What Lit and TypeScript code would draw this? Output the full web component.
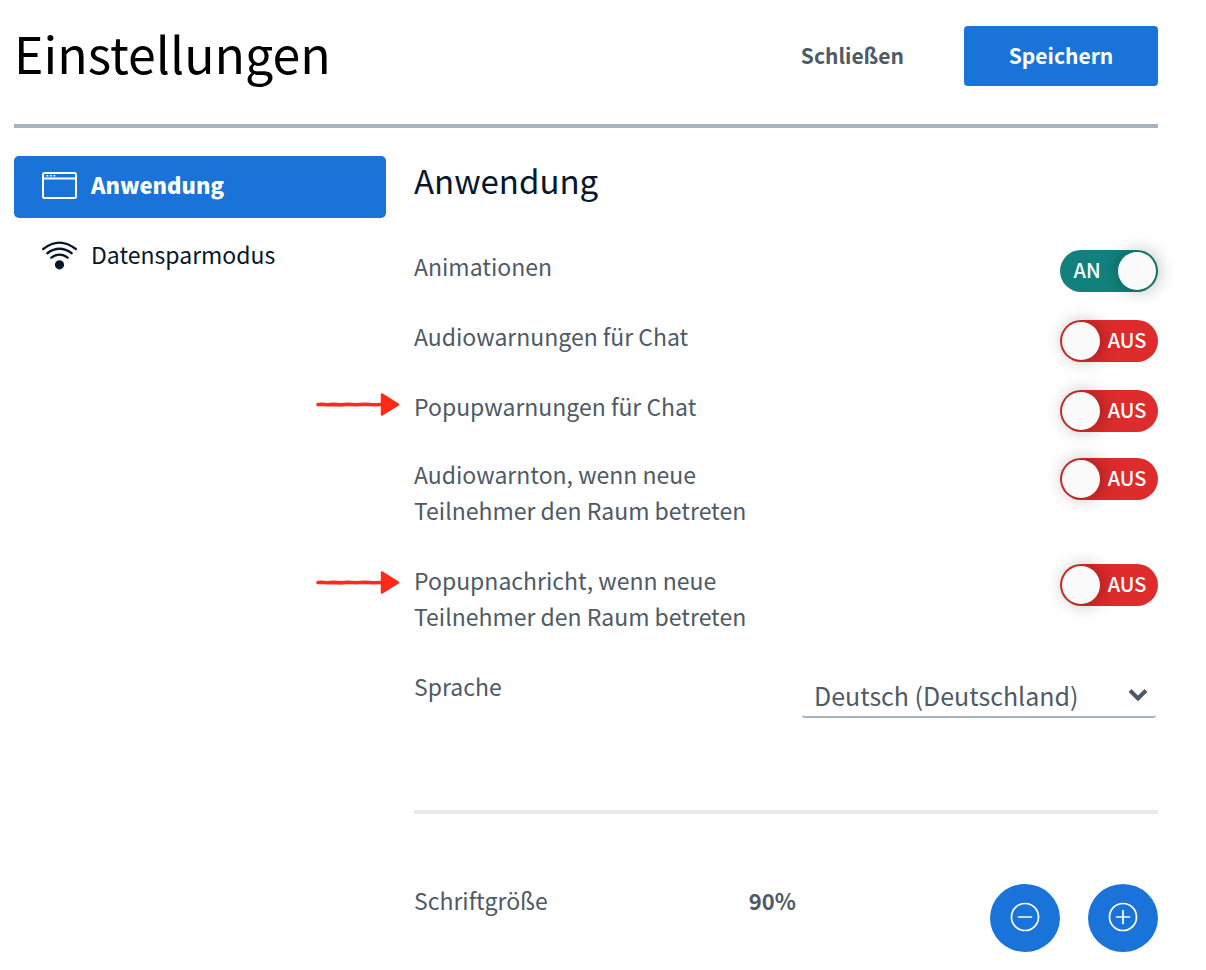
import { LitElement, html, css, svg, nothing } from "lit";
import { customElement, property, state } from "lit/decorators.js";

@customElement("toggle-switch")
class ToggleSwitch extends LitElement {
  @property({ type: Boolean }) checked = false;
  @property() label = "";

  static styles = css`
    :host {
      display: block;
      flex: none;
      padding-top: 2px;
    }
    .track {
      position: relative;
      display: flex;
      align-items: center;
      justify-content: flex-end;
      box-sizing: border-box;
      width: 98px;
      height: 42px;
      padding: 2px;
      border-radius: 21px;
      background: #de2b2b;
      color: #fff;
      font-size: 20px;
      font-weight: 500;
      line-height: 36px;
      cursor: pointer;
    }
    .on {
      background: #12807c;
      flex-direction: row-reverse;
    }
    input {
      position: absolute;
      inset: 0;
      width: 100%;
      height: 100%;
      margin: 0;
      opacity: 0;
      cursor: pointer;
    }
    .text {
      flex: 1;
      text-align: center;
      padding: 0 2px 2px 0;
    }
    .on .text {
      padding-right: 6px;
    }
    .thumb {
      width: 38px;
      height: 38px;
      border-radius: 50%;
      background: #fafafa;
      box-shadow: 2px 0 20px -2px rgba(0, 0, 0, 0.4);
    }
  `;

  render() {
    return html`<label class="track ${this.checked ? "on" : ""}">
      <input
        type="checkbox"
        role="switch"
        aria-label=${this.label}
        .checked=${this.checked}
        @change=${(e: Event) => (this.checked = (e.target as HTMLInputElement).checked)}
      />
      <span class="thumb"></span>
      <span class="text">${this.checked ? "AN" : "AUS"}</span>
    </label>`;
  }
}

const arrow = html`<svg class="arrow" viewBox="0 0 84 26" aria-hidden="true">
  ${svg`<path d="M2 12.500l4-.3 5 .6 6-.4 8 .5 7-.6 8 .4 9-.5 8 .6 10-.3" stroke="#ff2a17" stroke-width="3.600" stroke-linecap="round" fill="none"/>
  <path d="M66 2.500L82 12.500 66 22.500Z" fill="#ff2a17" stroke="#ff2a17" stroke-width="2.500" stroke-linejoin="round"/>`}
</svg>`;

@customElement("app-root")
class AppRoot extends LitElement {
  @state() private size = 90;

  static styles = css`
    :host {
      display: block;
      font-family: "Noto Sans CJK SC", "Noto Sans", sans-serif;
      font-size: 23px;
      line-height: 36px;
      color: #4e5a66;
      background: #fff;
    }
    * {
      box-sizing: border-box;
    }
    h1,
    h2 {
      margin: 0;
      font-weight: 400;
    }
    button,
    select {
      font: inherit;
      border: 0;
      cursor: pointer;
    }
    .page {
      padding: 26px 48px 16px 14px;
    }
    header {
      display: flex;
      align-items: center;
      height: 102px;
      padding-bottom: 38px;
      border-bottom: 4px solid #a7b3bf;
    }
    h1 {
      flex: 1;
      padding-bottom: 8px;
      color: #000;
      font-size: 50px;
      line-height: 60px;
    }
    .close,
    .save {
      height: 60px;
      padding: 0 32px 2px;
      border-radius: 4px;
      font-size: 21px;
      font-weight: 700;
    }
    .close {
      margin-right: 28px;
      background: none;
      color: #4e5a66;
    }
    .save {
      width: 194px;
      background: #1a73d8;
      color: #fff;
    }
    .body {
      display: grid;
      grid-template-columns: 1fr 2fr;
      gap: 28px;
      padding-top: 28px;
    }
    nav {
      display: flex;
      flex-direction: column;
      gap: 8px;
    }
    .tab {
      display: flex;
      align-items: center;
      gap: 14px;
      height: 62px;
      padding: 0 28px 4px;
      border-radius: 5px;
      background: none;
      color: #06172a;
      text-align: left;
    }
    .tab.active {
      background: #1a73d8;
      color: #fff;
      font-size: 22px;
      font-weight: 900;
    }
    .tab span {
      padding-bottom: 2px;
    }
    .tab svg {
      width: 35px;
      height: 30px;
      flex: none;
    }
    h2 {
      margin-bottom: 44px;
      color: #06172a;
      font-size: 33px;
      line-height: 48px;
    }
    .group {
      display: flex;
      flex-direction: column;
      gap: 26px;
      margin-bottom: 24px;
    }
    .group.tall {
      gap: 34px;
      margin-bottom: 34px;
    }
    .row {
      position: relative;
      display: flex;
      justify-content: space-between;
      align-items: flex-start;
    }
    .name {
      max-width: 350px;
    }
    .arrow {
      position: absolute;
      right: calc(100% + 14px);
      top: 4px;
      width: 84px;
      height: 26px;
    }
    .tall .arrow {
      top: 8px;
    }
    .select {
      position: relative;
      width: 356px;
      padding: 8px 2px 0 0;
    }
    select {
      width: 100%;
      height: 42px;
      padding: 0 44px 2px 12px;
      appearance: none;
      border-bottom: 2px solid #a7b3bf;
      border-radius: 3px;
      background: #fff;
      color: #4e5a66;
      font-size: 25px;
      line-height: 38px;
    }
    .select svg {
      position: absolute;
      right: 10px;
      top: 20px;
      width: 20px;
      height: 14px;
      pointer-events: none;
    }
    hr {
      margin: 92px 0 68px;
      border: 0;
      height: 4px;
      background: #e8eaed;
    }
    .size {
      display: grid;
      grid-template-columns: 9fr 2fr 9fr;
      align-items: start;
    }
    .value {
      font-size: 22px;
      font-weight: 700;
    }
    .steps {
      display: flex;
      justify-content: flex-end;
      gap: 28px;
      padding-top: 2px;
    }
    .step {
      display: grid;
      place-items: center;
      width: 70px;
      height: 68px;
      padding: 0 0 2px;
      border-radius: 50%;
      background: #1a73d8;
    }
    .step svg {
      width: 30px;
      height: 30px;
    }
  `;

  private row(name: string, checked = false, marked = false) {
    return html`<div class="row">
      ${marked ? arrow : nothing}
      <span class="name">${name}</span>
      <toggle-switch .label=${name} .checked=${checked}></toggle-switch>
    </div>`;
  }

  render() {
    return html`<div class="page">
      <header>
        <h1>Einstellungen</h1>
        <button class="close">Schließen</button>
        <button class="save">Speichern</button>
      </header>
      <div class="body">
        <nav>
          <button class="tab active">
            <svg viewBox="0 0 35 30" fill="none" stroke="#fff" aria-hidden="true">
              <rect x="1" y="3" width="33" height="25" rx="1.500" stroke-width="2" />
              <path d="M1 8.500H34" stroke-width="1.800" />
              <path d="M4.500 5.800h1.800M8 5.800h1.800M11.500 5.800h1.800" stroke-width="1.500" />
            </svg>
            <span>Anwendung</span>
          </button>
          <button class="tab">
            <svg viewBox="0 0 35 30" fill="none" stroke="#06172a" stroke-width="2.300" stroke-linecap="round" aria-hidden="true">
              <path d="M1.200 9Q17.500 -3.800 33.800 9" />
              <path d="M5.300 13.200Q17.500 4.400 29.700 13.200" />
              <path d="M9.300 17.600Q17.500 11.800 25.700 17.600" />
              <circle cx="17.500" cy="24.800" r="4.600" fill="#06172a" stroke="none" />
            </svg>
            <span>Datensparmodus</span>
          </button>
        </nav>
        <main>
          <h2>Anwendung</h2>
          <div class="group">
            ${this.row("Animationen", true)}
            ${this.row("Audiowarnungen für Chat")}
            ${this.row("Popupwarnungen für Chat", false, true)}
          </div>
          <div class="group tall">
            ${this.row("Audiowarnton, wenn neue Teilnehmer den Raum betreten")}
            ${this.row("Popupnachricht, wenn neue Teilnehmer den Raum betreten", false, true)}
          </div>
          <div class="row">
            <label for="lang">Sprache</label>
            <div class="select">
              <select id="lang">
                <option>Deutsch (Deutschland)</option>
              </select>
              <svg viewBox="0 0 20 14" fill="none" stroke="#4e5a66" stroke-width="4" aria-hidden="true">
                <path d="M2 2.500L10 10.500 18 2.500" />
              </svg>
            </div>
          </div>
          <hr />
          <div class="size">
            <span>Schriftgröße</span>
            <span class="value">${this.size}%</span>
            <div class="steps">
              <button class="step" aria-label="Schrift verkleinern" @click=${() => (this.size -= 10)}>
                <svg viewBox="0 0 30 30" fill="none" stroke="#fff" stroke-width="1.700" stroke-linecap="round">
                  <circle cx="15" cy="15" r="13.500" />
                  <path d="M8.500 15h13" />
                </svg>
              </button>
              <button class="step" aria-label="Schrift vergrößern" @click=${() => (this.size += 10)}>
                <svg viewBox="0 0 30 30" fill="none" stroke="#fff" stroke-width="1.700" stroke-linecap="round">
                  <circle cx="15" cy="15" r="13.500" />
                  <path d="M8.500 15h13M15 8.500v13" />
                </svg>
              </button>
            </div>
          </div>
        </main>
      </div>
    </div>`;
  }
}
